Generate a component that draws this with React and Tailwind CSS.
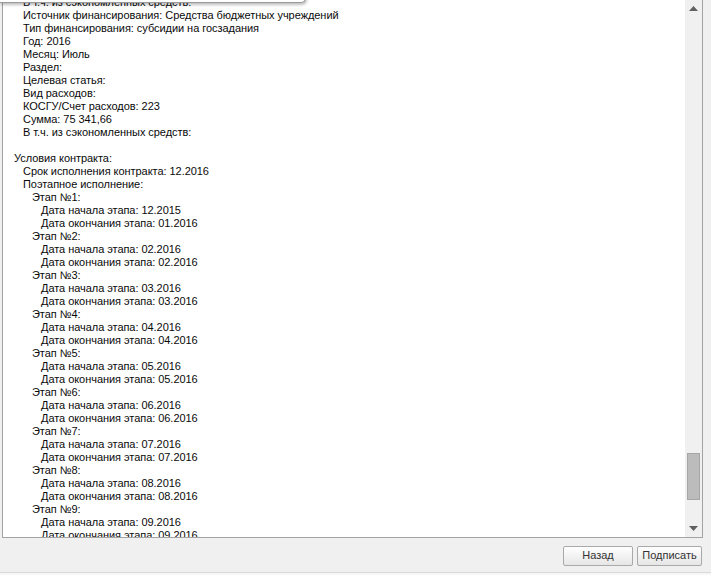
import React from 'react';

const info = [
  'Источник финансирования: Средства бюджетных учреждений',
  'Тип финансирования: субсидии на госзадания',
  'Год: 2016',
  'Месяц: Июль',
  'Раздел:',
  'Целевая статья:',
  'Вид расходов:',
  'КОСГУ/Счет расходов: 223',
  'Сумма: 75 341,66',
  'В т.ч. из сэкономленных средств:',
];

const stages = [
  ['12.2015', '01.2016'],
  ['02.2016', '02.2016'],
  ['03.2016', '03.2016'],
  ['04.2016', '04.2016'],
  ['05.2016', '05.2016'],
  ['06.2016', '06.2016'],
  ['07.2016', '07.2016'],
  ['08.2016', '08.2016'],
  ['09.2016', '09.2016'],
];

const Line = ({ level = 0, children }) => {
  const pad = ['pl-[11px]', 'pl-[20px]', 'pl-[29px]', 'pl-[38px]'][level];
  return <div className={`${pad} h-[13px] whitespace-nowrap`}>{children || '\u00a0'}</div>;
};

const Button = ({ children, className }) => (
  <button
    className={`h-[20px] rounded-[2px] border border-[#a9a9a9] bg-gradient-to-b from-[#ffffff] to-[#e6e6e6] text-[11px] text-[#333] ${className}`}
  >
    {children}
  </button>
);

const App = () => {
  return (
    <div
      className="relative flex h-[575px] w-[711px] flex-col overflow-hidden bg-[#f0f0f0]"
      style={{ fontFamily: '"Liberation Sans", Arial, sans-serif' }}
    >
      <div className="ml-[2px] flex h-[538px] w-[701px] border-x border-b border-[#a3a3a3] bg-white">
        <div className="flex-1 overflow-hidden">
          <div className="mt-[-4px] text-[11px] leading-[13px] tracking-[-0.05px] text-[#0a0a0a]">
            <Line level={1}>В т.ч. из сэкономленных средств:</Line>
            {info.map((t) => (
              <Line key={t} level={1}>{t}</Line>
            ))}
            <Line />
            <Line level={0}>Условия контракта:</Line>
            <Line level={1}>Срок исполнения контракта: 12.2016</Line>
            <Line level={1}>Поэтапное исполнение:</Line>
            {stages.map(([a, b], i) => (
              <React.Fragment key={i}>
                <Line level={2}>Этап №{i + 1}:</Line>
                <Line level={3}>Дата начала этапа: {a}</Line>
                <Line level={3}>Дата окончания этапа: {b}</Line>
              </React.Fragment>
            ))}
          </div>
        </div>
        <div className="flex w-[17px] flex-col items-center bg-[#f0f0f0]">
          <div className="flex h-[17px] w-full items-center justify-center">
            <svg width="9" height="5" viewBox="0 0 9 5">
              <path d="M0 5 L4.5 0 L9 5 Z" fill="#606060" />
            </svg>
          </div>
          <div className="flex-1" />
          <div className="h-[47px] w-[13px] border border-[#a6a6a6] bg-[#bcbcbc]" />
          <div className="h-[20px]" />
          <div className="flex h-[17px] w-full items-center justify-center">
            <svg width="9" height="5" viewBox="0 0 9 5">
              <path d="M0 0 L4.5 5 L9 0 Z" fill="#606060" />
            </svg>
          </div>
        </div>
      </div>

      <div className="flex h-[34px] items-center justify-end gap-[4px] pr-[9px] pt-[1px]">
        <Button className="w-[70px]">Назад</Button>
        <Button className="w-[65px]">Подписать</Button>
      </div>
      <div className="flex-1 border-t border-[#d9d9d9] bg-[#f7f7f7]" />

      <div className="absolute left-0 top-[-10px] h-[13px] w-[306px] rounded-br-[5px] border-b border-r border-[#9a9a9a] bg-white shadow-[1px_2px_3px_rgba(0,0,0,0.25)]" />
    </div>
  );
};

export default App;
